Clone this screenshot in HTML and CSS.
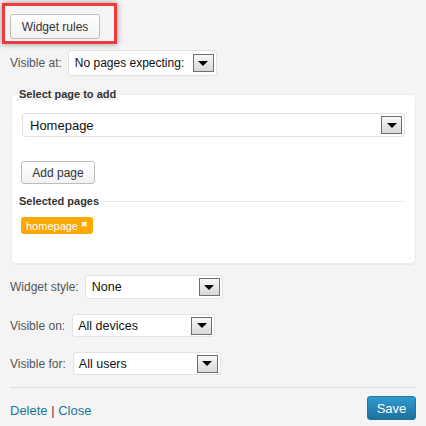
FILE: index.html
```html
<!DOCTYPE html>
<html>
<head>
<meta charset="utf-8">
<link rel="stylesheet" href="styles.css">
</head>
<body>
<div class="page">
  <div class="highlight">
    <button class="btn">Widget rules</button>
  </div>

  <div class="row row-at">
    <span class="label">Visible at:</span>
    <div class="select sel-at"><span class="sel-text">No pages expecting:</span><span class="arrow"></span></div>
  </div>

  <fieldset class="panel">
    <legend class="legend">Select page to add</legend>
    <div class="select sel-page"><span class="sel-text">Homepage</span><span class="arrow"></span></div>
    <button class="btn btn-add">Add page</button>
    <div class="sub-head"><span class="sub-title">Selected pages</span><span class="sub-line"></span></div>
    <div class="tags"><span class="tag">homepage <span class="tag-x">✖</span></span></div>
  </fieldset>

  <div class="row row-style">
    <span class="label">Widget style:</span>
    <div class="select sel-style"><span class="sel-text">None</span><span class="arrow"></span></div>
  </div>
  <div class="row row-on">
    <span class="label">Visible on:</span>
    <div class="select sel-on"><span class="sel-text">All devices</span><span class="arrow"></span></div>
  </div>
  <div class="row row-for">
    <span class="label">Visible for:</span>
    <div class="select sel-for"><span class="sel-text">All users</span><span class="arrow"></span></div>
  </div>

  <div class="footer">
    <div class="links"><a class="link">Delete</a> <span class="pipe">|</span> <a class="link">Close</a></div>
    <button class="btn-save">Save</button>
  </div>
</div>
</body>
</html>
```

FILE: styles.css
```css
* { box-sizing: border-box; }
html, body { margin: 0; padding: 0; }
body {
  background: #f4f4f4;
  font-family: "Liberation Sans", Arial, sans-serif;
  font-size: 12px;
  color: #333;
  width: 426px;
  height: 426px;
  overflow: hidden;
}
.page { padding: 3px 10px 0 10px; }

.highlight {
  margin-left: -8px;
  width: 115px;
  height: 41px;
  border: 3px solid #ee3a3e;
  box-shadow: 0 0 6px rgba(0,0,0,0.4);
  padding: 8px 0 0 5px;
}
.btn {
  display: block;
  height: 25px;
  width: 90px;
  padding: 0;
  border: 1px solid #bdbdbd;
  border-radius: 3px;
  background: linear-gradient(#ffffff, #f2f2f2);
  font-family: "Liberation Sans", Arial, sans-serif;
  font-size: 12px;
  color: #333;
}

.row { display: flex; align-items: center; }
.label { color: #555; font-size: 12px; }
.row-at { margin-top: 6px; gap: 6px; }
.row-style { margin-top: 11px; gap: 6px; }
.row-on { margin-top: 15px; gap: 7px; }
.row-for { margin-top: 15px; gap: 7px; }

.select {
  position: relative;
  display: flex;
  align-items: center;
  background: #fff;
  border: 1px solid #e2e2e2;
  border-radius: 3px;
  padding-left: 7px;
  color: #111;
  font-size: 12px;
}
.arrow {
  margin-left: auto;
  margin-right: 2px;
  width: 21px;
  height: 18px;
  border: 1px solid #6e6e6e;
  background: linear-gradient(#f8f8f8, #d8d8d8);
  display: flex;
  align-items: center;
  justify-content: center;
}
.arrow::after {
  content: "";
  border-left: 5px solid transparent;
  border-right: 5px solid transparent;
  border-top: 5px solid #000;
}
.sel-at { width: 149px; height: 26px; font-size: 12px; padding-left: 6px; }
.sel-page { width: 383px; height: 24px; font-size: 13px; }
.sel-style { width: 138px; height: 24px; padding-left: 6px; font-size: 12.5px; }
.sel-on { width: 143px; height: 23px; padding-left: 5px; font-size: 12.5px; }
.sel-for { width: 148px; height: 23px; padding-left: 5px; font-size: 12.5px; }

.panel {
  margin: 12px 0 0 1px;
  width: 404px;
  height: 176px;
  border: 1px solid #ebebeb;
  border-radius: 5px;
  background: #fff;
  padding: 12px 10px 0 10px;
  box-shadow: 0 1px 1px rgba(0,0,0,0.05);
}
.legend {
  font-weight: bold;
  font-size: 11px;
  color: #333;
  padding: 0 2px;
  margin-left: -5px;
  background: #f4f4f4;
  line-height: 13px;
}
.btn-add {
  margin-top: 24px;
  margin-left: -1px;
  width: 74px;
  height: 23px;
}
.sub-head {
  display: flex;
  align-items: center;
  margin-top: 11px;
  margin-left: -3px;
  gap: 2px;
}
.sub-title { font-weight: bold; font-size: 11px; color: #333; }
.sub-line { flex: 1; height: 1px; background: #e8e8e8; margin-top: 1px; }
.tags { margin-top: 10px; margin-left: -1px; }
.tag {
  display: inline-flex;
  align-items: center;
  height: 17px;
  padding: 0 5px 0 5px;
  background: #ffa800;
  color: #fff;
  border-radius: 3px;
  font-size: 11px;
}
.tag-x { font-size: 8px; margin-left: 3px; margin-top: -3px; }

.footer {
  margin-top: 12px;
  border-top: 1px solid #dcdcdc;
  padding-top: 8px;
  display: flex;
  justify-content: space-between;
  align-items: center;
}
.links { font-size: 13px; padding-top: 4px; }
.link { color: #21759b; text-decoration: none; }
.pipe { color: #6a2c4e; }
.btn-save {
  width: 49px;
  height: 24px;
  padding: 0;
  border: 1px solid #21759b;
  border-radius: 3px;
  background: linear-gradient(#2d9bd0, #1f6f9e);
  color: #fff;
  font-family: "Liberation Sans", Arial, sans-serif;
  font-size: 13px;
}
```
